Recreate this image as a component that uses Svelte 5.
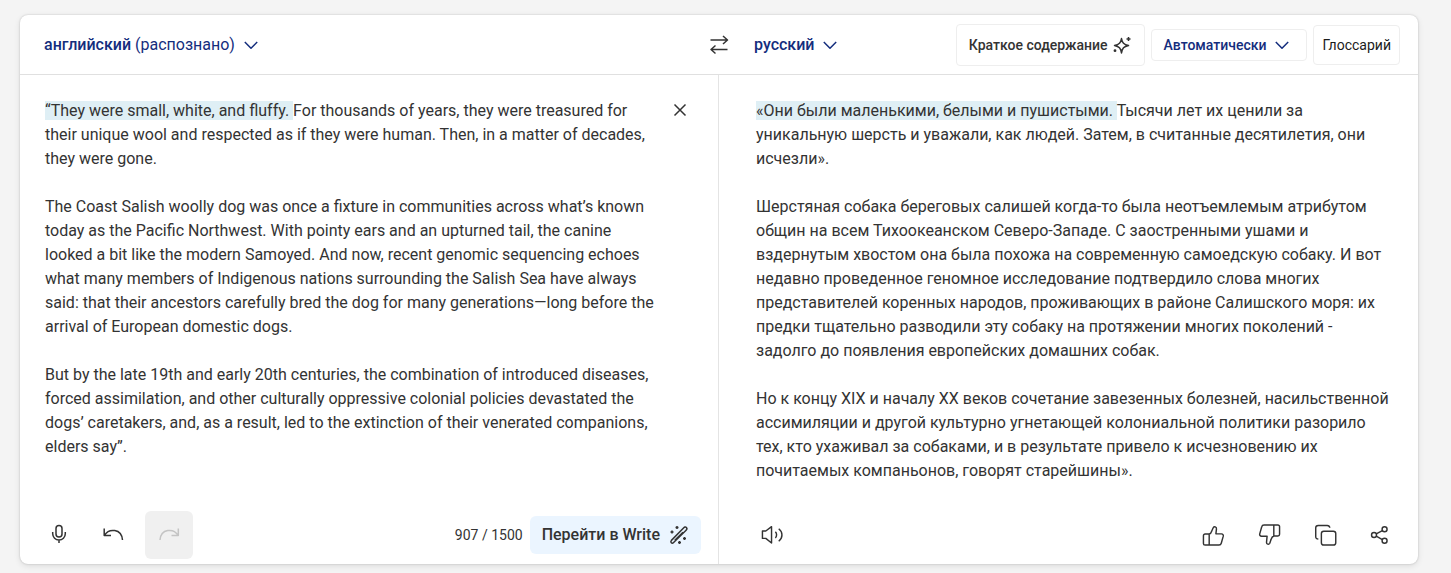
<script>
  const source = [
    'The Coast Salish woolly dog was once a fixture in communities across what’s known today as the Pacific Northwest. With pointy ears and an upturned tail, the canine looked a bit like the modern Samoyed. And now, recent genomic sequencing echoes what many members of Indigenous nations surrounding the Salish Sea have always said: that their ancestors carefully bred the dog for many generations—long before the arrival of European domestic dogs.',
    'But by the late 19th and early 20th centuries, the combination of introduced diseases, forced assimilation, and other culturally oppressive colonial policies devastated the dogs’ caretakers, and, as a result, led to the extinction of their venerated companions, elders say”.'
  ];
  const target = [
    'Шерстяная собака береговых салишей когда-то была неотъемлемым атрибутом общин на всем Тихоокеанском Северо-Западе. С заостренными ушами и вздернутым хвостом она была похожа на современную самоедскую собаку. И вот недавно проведенное геномное исследование подтвердило слова многих представителей коренных народов, проживающих в районе Салишского моря: их предки тщательно разводили эту собаку на протяжении многих поколений - задолго до появления европейских домашних собак.',
    'Но к концу XIX и началу XX веков сочетание завезенных болезней, насильственной ассимиляции и другой культурно угнетающей колониальной политики разорило тех, кто ухаживал за собаками, и в результате привело к исчезновению их почитаемых компаньонов, говорят старейшины».'
  ];
</script>

{#snippet chevron()}
  <svg width="16" height="16" viewBox="0 0 16 16"><path d="M1.8 5 8 11.2 14.2 5" /></svg>
{/snippet}

<main class="translator">
  <header class="bar">
    <div class="side from">
      <button class="lang"><span><b>английский</b> (распознано)</span>{@render chevron()}</button>
    </div>
    <button class="swap" aria-label="Поменять языки">
      <svg width="24" height="24" viewBox="0 0 24 24"><path d="M3.500 7h17M16 3l4.500 4-4.500 4M20.500 16.500H4M8.500 12.500 4 16.500l4.500 4" /></svg>
    </button>
    <div class="side to">
      <button class="lang"><b>русский</b>{@render chevron()}</button>
      <div class="options">
        <button class="option summary">
          Краткое содержание
          <svg width="20" height="20" viewBox="0 0 20 20">
            <path d="M9.500 3.500C10.200 7.900 11.800 9.500 16.500 10.500 11.800 11.500 10.200 13.200 9.500 18 8.800 13.200 7.200 11.500 2.500 10.500 7.200 9.500 8.800 7.900 9.500 3.500Z" />
            <path d="M16.500 2v4M14.500 4h4" />
            <circle class="dot" cx="3" cy="15.700" r="1.400" />
          </svg>
        </button>
        <button class="option tone">Автоматически {@render chevron()}</button>
        <button class="option glossary">Глоссарий</button>
      </div>
    </div>
  </header>

  <div class="panes">
    <section class="pane input">
      <div class="entry">
        <div class="text" lang="en">
          <p><mark>“They were small, white, and fluffy.{' '}</mark>For thousands of years, they were treasured for their unique wool and respected as if they were human. Then, in a matter of decades, they were gone.</p>
          {#each source as paragraph}<p>{paragraph}</p>{/each}
        </div>
        <button class="close" aria-label="Удалить текст">
          <svg width="16" height="16" viewBox="0 0 16 16"><path d="m2.500 2.500 11 11M13.500 2.500l-11 11" /></svg>
        </button>
      </div>
      <footer class="tools">
        <button class="tool" aria-label="Голосовой ввод">
          <svg width="24" height="24" viewBox="0 0 24 24"><rect x="9" y="2.500" width="6" height="11.500" rx="3" /><path d="M5.700 9v1.800a6.300 6.300 0 0 0 12.600 0V9M12 17.100V20" /></svg>
        </button>
        <button class="tool" aria-label="Отменить">
          <svg width="24" height="24" viewBox="0 0 24 24"><path d="M2.200 5.500v7H9M2.500 12.200C7 5 19.500 5.500 20.500 17" /></svg>
        </button>
        <button class="tool" disabled aria-label="Повторить">
          <svg width="24" height="24" viewBox="0 0 24 24"><path d="M21.300 5.500v7H14.500M21 12.200C16.500 5 4 5.500 3 17" /></svg>
        </button>
        <span class="count">907 / 1500</span>
        <button class="write">
          Перейти в Write
          <svg width="20" height="20" viewBox="0 0 20 20">
            <path d="M2.300 17.700c-.7-.7-.4-1.700.1-2.300L14.800 2.800c.7-.7 1.700-1.200 2.600-.3s.4 2-.3 2.700L4.600 17.500c-.6.6-1.600.9-2.300.2ZM5.800 15.400 14 7.200" />
            <path d="M8 1v3M6.500 2.500h3M3 5.500v3M1.500 7h3M15.500 12v3M14 13.500h3M10.500 16v3M9 17.500h3" />
          </svg>
        </button>
      </footer>
    </section>

    <section class="pane result">
      <div class="text" lang="ru">
        <p><mark>«Они были маленькими, белыми и пушистыми.{' '}</mark>Тысячи лет их ценили за уникальную шерсть и уважали, как людей. Затем, в считанные десятилетия, они исчезли».</p>
        {#each target as paragraph}<p>{paragraph}</p>{/each}
      </div>
      <footer class="tools">
        <button class="tool speak" aria-label="Прослушать">
          <svg width="24" height="24" viewBox="0 0 24 24"><path d="M1.500 7.300H5L11 2.800v17L5 15H1.500ZM15 8c1.700 1.700 1.700 4.800 0 6.500M18.500 5c4.500 3.500 4.500 9.500 0 13" /></svg>
        </button>
        <button class="tool" aria-label="Хороший перевод">
          <svg width="24" height="24" viewBox="0 0 24 24"><path d="M7.500 10.500H3.200c-1 0-1.700.7-1.700 1.700v8.100c0 1 .7 1.700 1.700 1.700h14.500c1.200 0 2.100-.7 2.400-1.900l2.100-7.400c.3-1.300-.5-2.400-1.800-2.400H14.500l.6-5.200c.2-2.200-2.400-3-3.400-1.200L10.300 7c-.5 1.700-1.300 3-2.800 3.500V22" /></svg>
        </button>
        <button class="tool" aria-label="Плохой перевод">
          <svg width="24" height="24" viewBox="0 0 24 24"><path d="M16.500 12.500h4.300c1 0 1.700-.7 1.700-1.700V2.700c0-1-.7-1.700-1.700-1.700H6.300C5.100 1 4.200 1.700 3.900 2.900l-2.100 7.400c-.3 1.300.5 2.400 1.800 2.400h5.900l-.6 6.200c-.2 2.200 2.400 3 3.400 1.200l1.400-4.100c.5-1.700 1.300-3 2.800-3.500V1" /></svg>
        </button>
        <button class="tool" aria-label="Копировать">
          <svg width="24" height="24" viewBox="0 0 24 24"><rect x="7.700" y="7.500" width="15" height="14.500" rx="2.500" /><path d="M4.500 15.700c-1.600 0-2.700-.7-2.700-2.400V4C1.800 2.400 2.900 1.500 4.500 1.500h9.300c1.600 0 2.500.8 2.700 2.400" /></svg>
        </button>
        <button class="tool share" aria-label="Поделиться">
          <svg width="24" height="24" viewBox="0 0 24 24"><circle cx="6.300" cy="11.500" r="2.600" /><circle cx="17.300" cy="5.500" r="2.600" /><circle cx="17.300" cy="17.500" r="2.600" /><path d="m8.600 10.300 6.400-3.500M8.600 12.700l6.400 3.500" /></svg>
        </button>
      </footer>
    </section>
  </div>
</main>

<style>
  :global(body) { margin: 0; padding: 15px 33px 8px 20px; background: #f4f4f4; }
  .translator {
    color: #333;
    font: 16px/24px Roboto, sans-serif;
    background: #fff;
    border-radius: 8px;
    box-shadow: 0 0 2px rgba(0, 0, 0, 0.2), 0 2px 6px rgba(0, 0, 0, 0.1);
  }
  button {
    display: flex;
    align-items: center;
    justify-content: center;
    padding: 0;
    border: 0;
    background: none;
    color: inherit;
    font: inherit;
    cursor: pointer;
  }
  svg { flex: none; fill: none; stroke: currentColor; stroke-width: 1.5; stroke-linejoin: round; }
  .dot { fill: currentColor; stroke: none; }
  b { font-weight: 500; }

  .bar {
    display: grid;
    grid-template-columns: 1fr auto 1fr;
    align-items: center;
    box-sizing: border-box;
    min-height: 60px;
    border-bottom: 1px solid #e0e0e0;
  }
  .side { display: flex; align-items: center; justify-content: space-between; }
  .from { padding-left: 24px; }
  .to { padding: 0 18px 0 23px; }
  .lang { gap: 8px; color: #142d7d; }
  .options { display: flex; align-items: center; gap: 6px; }
  .option {
    box-sizing: border-box;
    border: 1px solid #eee;
    border-radius: 4px;
    font-size: 14px;
    font-weight: 500;
    white-space: nowrap;
  }
  .summary { gap: 4px; height: 42px; padding: 0 12px; }
  .tone { gap: 8px; height: 32px; padding: 0 16px 0 12px; color: #142d7d; }
  .glossary { height: 40px; padding: 0 8px; color: #1b1b1b; font-weight: 400; }

  .panes { display: grid; grid-template-columns: 1fr 1fr; }
  .pane { display: flex; flex-direction: column; justify-content: space-between; }
  .input { border-right: 1px solid #e4e4e4; }
  .entry { display: flex; align-items: flex-start; }
  .entry .text { flex: 1; padding: 24px 8px 28px 25px; }
  .result .text { padding: 24px 24px 28px 37px; }
  p { margin: 0 0 24px; }
  p:last-child { margin: 0; }
  mark { padding: 0; background: #dfeff5; color: inherit; }
  .close { width: 32px; height: 32px; margin: 19px 22px 0 0; }

  .tools { display: flex; align-items: center; gap: 7px; padding: 0 17px 5px 15px; }
  .tool { width: 48px; height: 48px; border-radius: 6px; }
  .tool:disabled { background: #f0f0f0; color: #c4c4c4; cursor: default; }
  .count { margin-left: auto; font-size: 14px; }
  .write { gap: 9px; height: 38px; padding: 0 12px; border-radius: 6px; background: #ebf5ff; font-weight: 500; }
  .input .tools { gap: 7px; }
  .result .tools { gap: 8px; padding: 0 17px 5px 29px; }
  .result .tool svg { width: 23px; height: 23px; }
  .speak { margin-right: auto; }
  .share { width: 44px; }
</style>
